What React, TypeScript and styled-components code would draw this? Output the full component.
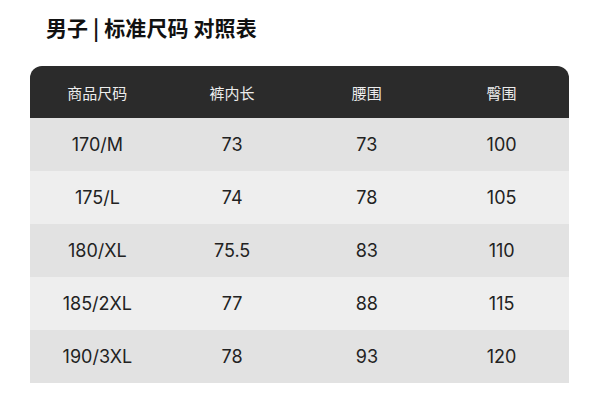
import React from 'react';
import styled, { createGlobalStyle } from 'styled-components';

const GlobalStyle = createGlobalStyle`
  html, body {
    margin: 0;
    padding: 0;
    background: #ffffff;
  }
  body {
    font-family: Inter, "Noto Sans CJK SC", sans-serif;
  }
`;

// Dados da tabela de medidas
const columns = ['商品尺码', '裤内长', '腰围', '臀围'];

const rows: string[][] = [
  ['170/M', '73', '73', '100'],
  ['175/L', '74', '78', '105'],
  ['180/XL', '75.5', '83', '110'],
  ['185/2XL', '77', '88', '115'],
  ['190/3XL', '78', '93', '120'],
];

const Page = styled.div`
  width: 600px;
  height: 408px;
  box-sizing: border-box;
  padding: 13px 31px 0 30px;
  display: flex;
  flex-direction: column;
`;

const Title = styled.h1`
  margin: 0 0 0 16px;
  font-family: "Noto Sans CJK SC", sans-serif;
  font-size: 21px;
  font-weight: 700;
  line-height: 29px;
  color: #111111;
  letter-spacing: 0.1px;
`;

const Table = styled.div`
  margin-top: 24px;
  border-radius: 12px 12px 0 0;
  overflow: hidden;
`;

const Row = styled.div<{ $bg: string; $h: number }>`
  display: grid;
  grid-template-columns: repeat(4, 1fr);
  align-items: center;
  height: ${p => p.$h}px;
  background: ${p => p.$bg};
`;

const HeadCell = styled.div`
  text-align: center;
  font-family: "Noto Sans CJK SC", sans-serif;
  font-size: 15px;
  color: #ededed;
  padding-top: 1px;
`;

const Cell = styled.div`
  text-align: center;
  font-family: Inter, "Noto Sans CJK SC", sans-serif;
  font-size: 18px;
  color: #222222;
`;

export default function App() {
  return (
    <>
      <GlobalStyle />
      <Page>
        <Title>男子 | 标准尺码 对照表</Title>
        <Table>
          <Row $bg="#2b2b2b" $h={52}>
            {columns.map(c => (
              <HeadCell key={c}>{c}</HeadCell>
            ))}
          </Row>
          {rows.map((r, i) => (
            <Row key={r[0]} $bg={i % 2 === 0 ? '#e2e2e2' : '#eeeeee'} $h={53}>
              {r.map((v, j) => (
                <Cell key={j}>{v}</Cell>
              ))}
            </Row>
          ))}
        </Table>
      </Page>
    </>
  );
}
